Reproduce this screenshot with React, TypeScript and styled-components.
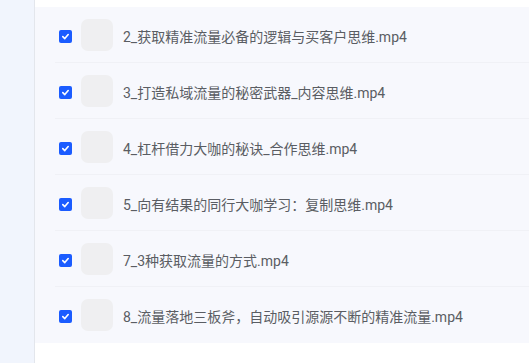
import React from "react";
import styled, { createGlobalStyle } from "styled-components";

const Global = createGlobalStyle`
  html, body { margin: 0; padding: 0; background: #ffffff; }
  body { font-family: "Noto Sans CJK SC", "Noto Sans", sans-serif; }
`;

const Page = styled.div`
  display: flex;
  width: 529px;
  height: 363px;
  overflow: hidden;
`;

const SideStrip = styled.div`
  width: 34px;
  flex-shrink: 0;
  background: #f1f5fd;
  border-right: 1px solid #e3e6ec;
`;

const Main = styled.div`
  flex: 1;
  padding-top: 7px;
  background: #ffffff;
`;

const List = styled.div`
  background: #f7f8fd;
  display: flex;
  flex-direction: column;
`;

const Row = styled.div<{ $last?: boolean }>`
  height: 56px;
  box-sizing: border-box;
  display: flex;
  align-items: center;
  padding-left: 24px;
  position: relative;
  &::after {
    content: "";
    position: absolute;
    left: 20px;
    right: 0;
    bottom: 0;
    height: 1px;
    background: ${(p) => (p.$last ? "transparent" : "#f0f1f6")};
  }
`;

const Check = styled.span`
  width: 13px;
  height: 13px;
  margin-top: 2px;
  border-radius: 2px;
  background: #1b5cff;
  display: flex;
  align-items: center;
  justify-content: center;
  flex-shrink: 0;
`;

const Thumb = styled.div`
  width: 32px;
  height: 32px;
  border-radius: 7px;
  background: #efeff1;
  margin-left: 9px;
  flex-shrink: 0;
`;

const Name = styled.span`
  margin-left: 10px;
  margin-top: 2px;
  font-family: "Roboto", "Noto Sans CJK SC", sans-serif;
  font-size: 14px;
  color: #5a5d63;
  white-space: nowrap;
`;

const items = [
  "2_获取精准流量必备的逻辑与买客户思维.mp4",
  "3_打造私域流量的秘密武器_内容思维.mp4",
  "4_杠杆借力大咖的秘诀_合作思维.mp4",
  "5_向有结果的同行大咖学习：复制思维.mp4",
  "7_3种获取流量的方式.mp4",
  "8_流量落地三板斧，自动吸引源源不断的精准流量.mp4",
];

export default function App() {
  return (
    <>
      <Global />
      <Page>
        <SideStrip />
        <Main>
          <List>
            {items.map((t, i) => (
              <Row key={t} $last={i === items.length - 1}>
                <Check>
                  <svg width="9" height="9" viewBox="0 0 10 10">
                    <path d="M2 5.2 L4.2 7.3 L8 2.8" fill="none" stroke="#fff" strokeWidth="1.8" strokeLinecap="round" strokeLinejoin="round" />
                  </svg>
                </Check>
                <Thumb />
                <Name>{t}</Name>
              </Row>
            ))}
          </List>
        </Main>
      </Page>
    </>
  );
}
